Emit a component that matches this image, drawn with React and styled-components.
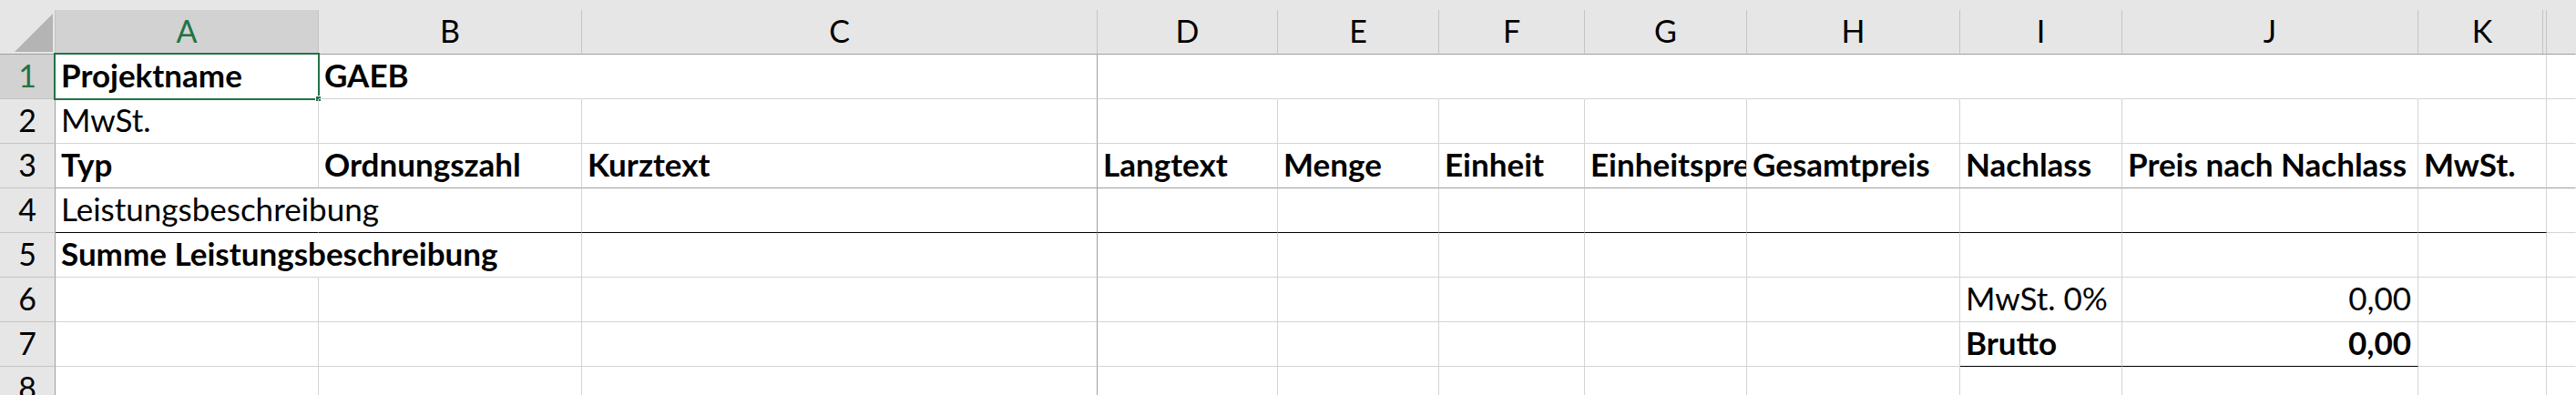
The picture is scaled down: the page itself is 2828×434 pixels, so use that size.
import styled, { createGlobalStyle } from "styled-components";

const GRID = "#d4d4d4";
const FREEZE = "#9f9f9f";
const HEAD_LINE = "#c4c4c4";
const HEAD_BG = "#e6e6e6";
const HEAD_ACTIVE = "#d2d2d2";
const GREEN = "#217346";
const BLACK = "#000";

const COLS = [
  { key: "A", width: 289 },
  { key: "B", width: 289 },
  { key: "C", width: 566 },
  { key: "D", width: 198 },
  { key: "E", width: 177 },
  { key: "F", width: 160 },
  { key: "G", width: 178 },
  { key: "H", width: 234 },
  { key: "I", width: 178 },
  { key: "J", width: 325 },
  { key: "K", width: 141 },
];

const GlobalStyle = createGlobalStyle`
  *, *::before, *::after { box-sizing: border-box; }
  html, body {
    margin: 0;
    padding: 0;
    background: #fff;
    overflow: hidden;
  }
  body {
    font-family: Lato, "Liberation Sans", sans-serif;
  }
`;

const Sheet = styled.div`
  display: grid;
  grid-template-columns: 61px ${COLS.map((c) => `${c.width}px`).join(" ")} 1fr;
  grid-template-rows: 11px 49px;
  grid-auto-rows: 49px;
  width: 2828px;
  height: 434px;
  overflow: hidden;
  background: #fff;
  font-size: 35px;
  color: ${BLACK};
`;

const TopBand = styled.div`
  grid-column: 1 / -1;
  background: ${HEAD_BG};
`;

const Corner = styled.div`
  display: flex;
  align-items: flex-end;
  justify-content: flex-end;
  padding: 0 2px 2px 0;
  background: ${HEAD_BG};
  border-right: 1px solid ${HEAD_LINE};
  border-bottom: 1px solid ${FREEZE};
`;

const ColHeader = styled.div`
  display: flex;
  align-items: flex-end;
  justify-content: center;
  padding-bottom: 8px;
  line-height: 1;
  font-size: 34px;
  background: ${(p) => (p.$active ? HEAD_ACTIVE : HEAD_BG)};
  color: ${(p) => (p.$active ? GREEN : BLACK)};
  border-right: 1px solid ${(p) => (p.$last ? "transparent" : HEAD_LINE)};
  border-bottom: 1px solid ${FREEZE};
  ${(p) =>
    p.$double &&
    `background-image: linear-gradient(to left, transparent 3px, ${HEAD_LINE} 3px, ${HEAD_LINE} 4px, transparent 4px);`}
`;

const RowHeader = styled.div`
  display: flex;
  align-items: flex-end;
  justify-content: center;
  padding-bottom: 8px;
  line-height: 1;
  font-size: 34px;
  background: ${(p) => (p.$active ? HEAD_ACTIVE : HEAD_BG)};
  color: ${(p) => (p.$active ? GREEN : BLACK)};
  border-right: 1px solid ${FREEZE};
  border-bottom: 1px solid ${HEAD_LINE};
`;

const Cell = styled.div`
  position: relative;
  display: flex;
  align-items: flex-end;
  justify-content: ${(p) => (p.$align === "right" ? "flex-end" : "flex-start")};
  min-width: 0;
  padding: 0 7px 8px 6px;
  line-height: 1;
  white-space: nowrap;
  font-weight: ${(p) => (p.$bold ? 700 : 400)};
  overflow: ${(p) => (p.$clip ? "hidden" : "visible")};
  border-right: 1px solid ${(p) => p.$right};
  border-bottom: 1px solid ${(p) => p.$bottom};
`;

const Selection = styled.div`
  position: absolute;
  inset: -2px;
  border: 2px solid ${GREEN};
  pointer-events: none;
`;

const FillHandle = styled.div`
  position: absolute;
  right: -4px;
  bottom: -4px;
  width: 7px;
  height: 7px;
  background: ${GREEN};
  border: 1px solid #fff;
`;

const rows = [
  {
    n: 1,
    bare: true,
    cells: {
      A: { text: "Projektname", bold: true, selected: true },
      B: { text: "GAEB", bold: true },
    },
  },
  { n: 2, cells: { A: { text: "MwSt." } } },
  {
    n: 3,
    bottom: FREEZE,
    cells: {
      A: { text: "Typ", bold: true },
      B: { text: "Ordnungszahl", bold: true },
      C: { text: "Kurztext", bold: true },
      D: { text: "Langtext", bold: true },
      E: { text: "Menge", bold: true },
      F: { text: "Einheit", bold: true },
      G: { text: "Einheitspreis", bold: true, clip: true },
      H: { text: "Gesamtpreis", bold: true },
      I: { text: "Nachlass", bold: true },
      J: { text: "Preis nach Nachlass", bold: true },
      K: { text: "MwSt.", bold: true },
    },
  },
  {
    n: 4,
    line: { keys: "ABCDEFGHIJK", color: BLACK },
    cells: { A: { text: "Leistungsbeschreibung", spill: true } },
  },
  {
    n: 5,
    cells: { A: { text: "Summe Leistungsbeschreibung", bold: true, spill: true } },
  },
  {
    n: 6,
    cells: {
      I: { text: "MwSt. 0%" },
      J: { text: "0,00", align: "right" },
    },
  },
  {
    n: 7,
    line: { keys: "IJ", color: BLACK },
    cells: {
      I: { text: "Brutto", bold: true },
      J: { text: "0,00", bold: true, align: "right" },
    },
  },
  { n: 8, cells: {} },
];

const rightLine = (row, key, cell) => {
  if (key === "C") return FREEZE;
  if (row.bare && key !== "K") return "transparent";
  if (cell && cell.spill) return "transparent";
  return GRID;
};

const bottomLine = (row, key) => {
  if (row.line && key && row.line.keys.includes(key)) return row.line.color;
  return row.bottom || GRID;
};

export default function App() {
  return (
    <>
      <GlobalStyle />
      <Sheet>
        <TopBand />
        <Corner>
          <svg width="42" height="42" viewBox="0 0 42 42">
            <polygon points="42,0 42,42 0,42" fill="#b4b4b4" />
          </svg>
        </Corner>
        {COLS.map((c) => (
          <ColHeader key={c.key} $active={c.key === "A"} $double={c.key === "K"}>
            {c.key}
          </ColHeader>
        ))}
        <ColHeader $last />

        {rows.map((row) => [
          <RowHeader key={`h${row.n}`} $active={row.n === 1}>
            {row.n}
          </RowHeader>,
          ...COLS.map((c) => {
            const cell = row.cells[c.key];
            return (
              <Cell
                key={`${row.n}${c.key}`}
                $bold={cell?.bold}
                $align={cell?.align}
                $clip={cell?.clip}
                $right={rightLine(row, c.key, cell)}
                $bottom={bottomLine(row, c.key)}
              >
                {cell?.text}
                {cell?.selected && (
                  <Selection>
                    <FillHandle />
                  </Selection>
                )}
              </Cell>
            );
          }),
          <Cell key={`${row.n}rest`} $right="transparent" $bottom={bottomLine(row)} />,
        ])}
      </Sheet>
    </>
  );
}
